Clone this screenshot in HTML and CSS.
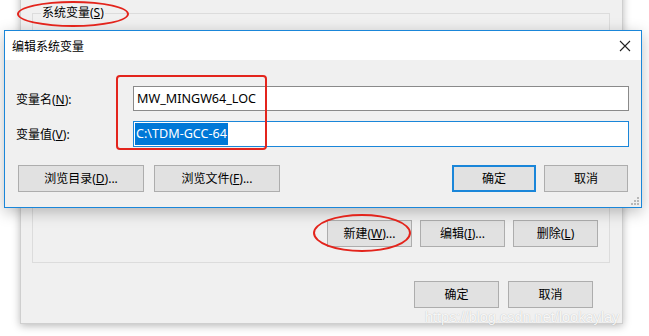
FILE: index.html
```html
<!DOCTYPE html>
<html lang="zh-CN">
<head>
<meta charset="utf-8">
<title>编辑系统变量</title>
<link rel="stylesheet" href="styles.css">
</head>
<body>
<div class="stage">
  <div class="bgwin">
    <div class="group">
      <span class="caption">系统变量(<u>S</u>)</span>
      <div class="group-buttons">
        <span class="btn">新建(<u>W</u>)...</span>
        <span class="btn">编辑(<u>I</u>)...</span>
        <span class="btn">删除(<u>L</u>)</span>
      </div>
    </div>
    <div class="win-buttons">
      <span class="btn">确定</span>
      <span class="btn">取消</span>
    </div>
  </div>

  <div class="dialog">
    <div class="titlebar">
      <span class="title">编辑系统变量</span>
      <svg class="close" width="12" height="12" viewBox="0 0 12 12"><path d="M1 1L11 11M11 1L1 11" stroke="#222" stroke-width="1.1" fill="none"/></svg>
    </div>
    <div class="dbody">
      <div class="row">
        <span class="label">变量名(<u>N</u>):</span>
        <span class="input">MW_MINGW64_LOC</span>
      </div>
      <div class="row">
        <span class="label">变量值(<u>V</u>):</span>
        <span class="input focus"><span class="sel">C:\TDM-GCC-64</span></span>
      </div>
      <div class="brow">
        <div class="bleft">
          <span class="btn wide1">浏览目录(<u>D</u>)...</span>
          <span class="btn wide2">浏览文件(<u>F</u>)...</span>
        </div>
        <div class="bright">
          <span class="btn def">确定</span>
          <span class="btn">取消</span>
        </div>
      </div>
    </div>
    <svg class="grip" width="8" height="8" viewBox="0 0 8 8" fill="#b8b8b8"><rect x="6" y="0" width="2" height="2"/><rect x="3" y="3" width="2" height="2"/><rect x="6" y="3" width="2" height="2"/><rect x="0" y="6" width="2" height="2"/><rect x="3" y="6" width="2" height="2"/><rect x="6" y="6" width="2" height="2"/></svg>
  </div>

  <div class="mark ell1"></div>
  <div class="mark ell2"></div>
  <div class="mark rect"></div>
  <div class="watermark">https://blog.csdn.net/lookaylay</div>
</div>
</body>
</html>
```
FILE: styles.css
```css
* { box-sizing: border-box; }
html, body { margin: 0; padding: 0; background: #ffffff; }
body {
  font-family: "Noto Sans", "Noto Sans CJK SC", sans-serif;
  font-size: 12px;
  color: #000;
}
u { text-decoration: underline; text-underline-offset: 1px; }
.stage {
  position: relative;
  width: 649px;
  height: 336px;
  overflow: hidden;
  background: #fff;
}

/* background window */
.bgwin {
  position: absolute;
  left: 20px;
  top: -20px;
  width: 603px;
  height: 344px;
  background: #f0f0f0;
  border: 1px solid #cfcfcf;
  box-shadow: 0 2px 8px rgba(0,0,0,0.28);
  padding: 32px 12px 15px 11px;
  display: flex;
  flex-direction: column;
}
.group {
  position: relative;
  height: 250px;
  border: 1px solid #dcdcdc;
  display: flex;
  align-items: flex-end;
  justify-content: flex-end;
  padding: 0 11px 15px 0;
}
.caption {
  position: absolute;
  left: 8px;
  top: -9px;
  padding: 0 1px;
  background: #f0f0f0;
  line-height: 16px;
}
.group-buttons { display: flex; gap: 8px; }
.group-buttons .btn { width: 85px; height: 27px; }
.win-buttons {
  display: flex;
  justify-content: flex-end;
  gap: 9px;
  margin-top: 18px;
  padding-right: 17px;
}
.win-buttons .btn { width: 85px; height: 27px; }

.btn {
  display: flex;
  align-items: center;
  justify-content: center;
  background: #e1e1e1;
  border: 1px solid #adadad;
  color: #000;
  line-height: 1;
}

/* dialog */
.dialog {
  position: absolute;
  left: 4px;
  top: 30px;
  width: 638px;
  height: 178px;
  border: 1px solid #1a86d9;
  background: #f0f0f0;
  box-shadow: 0 4px 14px rgba(0,0,0,0.25);
  display: flex;
  flex-direction: column;
}
.titlebar {
  height: 29px;
  background: #fff;
  display: flex;
  align-items: center;
  justify-content: space-between;
  padding: 0 10px 0 7px;
}
.title { font-size: 12px; }
.close { display: block; }
.dbody {
  flex: 1;
  padding: 26px 12px 0 11px;
  display: flex;
  flex-direction: column;
}
.row {
  display: flex;
  align-items: center;
  height: 25px;
  margin-bottom: 10px;
}
.row + .row { height: 26px; margin-bottom: 0; }
.label { width: 117px; }
.input {
  flex: 1;
  height: 100%;
  background: #fff;
  border: 1px solid #8a8a8a;
  display: flex;
  align-items: center;
  padding-left: 3px;
  font-size: 12.6px;
}
.input.focus { border-color: #1a86d9; padding-left: 1px; }
.sel {
  background: #0078d7;
  color: #fff;
  padding: 2px 1px 2px 1px;
  line-height: 18px;
}
.brow {
  display: flex;
  justify-content: space-between;
  margin-top: 18px;
}
.bleft, .bright { display: flex; gap: 10px; }
.bright { gap: 8px; margin-right: 1px; }
.brow .btn { height: 27px; width: 84px; }
.brow .wide1 { width: 126px; margin-left: 2px; }
.brow .wide2 { width: 126px; }
.brow .def { border: 2px solid #1a86d9; width: 84px; }
.grip {
  position: absolute;
  right: 2px;
  bottom: 2px;
}

/* annotations */
.mark {
  position: absolute;
  border: 2px solid #e3241c;
}
.ell1 { left: 17px; top: 1px; width: 112px; height: 26px; border-radius: 50%; border-width: 2.5px; }
.ell2 { left: 313px; top: 214px; width: 98px; height: 38px; border-radius: 50%; border-width: 2.5px; }
.rect { left: 116px; top: 75px; width: 151px; height: 75px; border-radius: 4px; }

.watermark {
  position: absolute;
  left: 425px;
  top: 309px;
  font-family: "Liberation Sans", sans-serif;
  font-size: 14.5px;
  color: rgba(255,255,255,0.9);
  text-shadow: 0 0 1px rgba(0,0,0,0.25);
  white-space: nowrap;
}
```
